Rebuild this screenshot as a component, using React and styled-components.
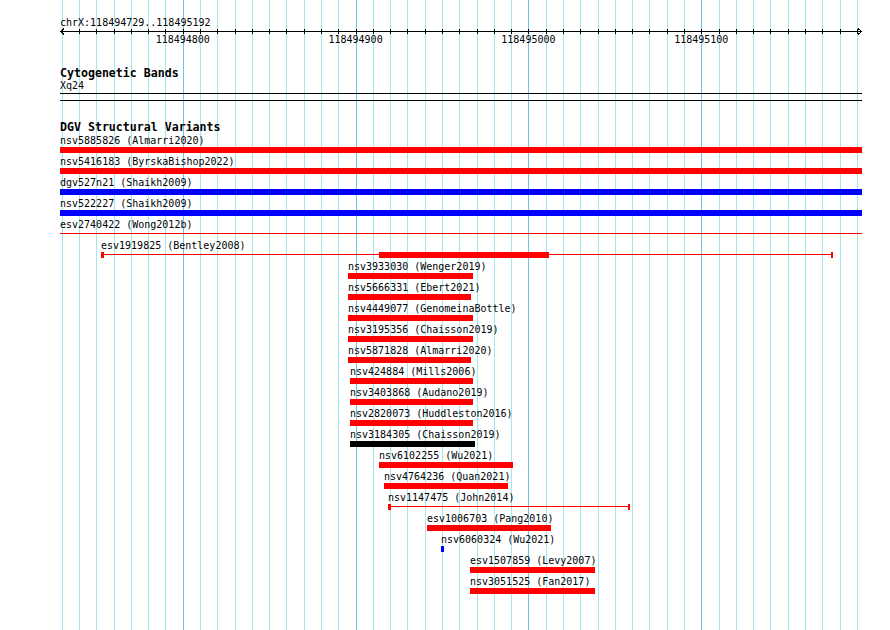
import React from "react";
import styled, { createGlobalStyle } from "styled-components";

const START = 118494729;
const END = 118495192;
const SPAN = END - START + 1;
const X0 = 60;
const WIDTH = 802;

const toX = (bp) => X0 + ((bp - START) * WIDTH) / SPAN;

const minorTicks = [];
for (let bp = START + 1; bp <= END; bp += 10) minorTicks.push(bp);
const majorTicks = minorTicks.filter((bp) => bp % 100 === 0);

const RED = "#ff0000";
const BLUE = "#0000ff";
const BLACK = "#000000";

// x values are page pixels, as read off the track
const variants = [
    { label: "nsv5885826 (Almarri2020)", start: 60, end: 862, color: RED },
    { label: "nsv5416183 (ByrskaBishop2022)", start: 60, end: 862, color: RED },
    { label: "dgv527n21 (Shaikh2009)", start: 60, end: 862, color: BLUE },
    { label: "nsv522227 (Shaikh2009)", start: 60, end: 862, color: BLUE },
    { label: "esv2740422 (Wong2012b)", start: 60, end: 862, color: RED, line: true },
    { label: "esv1919825 (Bentley2008)", start: 101, end: 833, color: RED, line: true, caps: true, core: [379, 549] },
    { label: "nsv3933030 (Wenger2019)", start: 348, end: 473, color: RED },
    { label: "nsv5666331 (Ebert2021)", start: 348, end: 471, color: RED },
    { label: "nsv4449077 (GenomeinaBottle)", start: 348, end: 473, color: RED },
    { label: "nsv3195356 (Chaisson2019)", start: 348, end: 473, color: RED },
    { label: "nsv5871828 (Almarri2020)", start: 348, end: 471, color: RED },
    { label: "nsv424884 (Mills2006)", start: 350, end: 473, color: RED },
    { label: "nsv3403868 (Audano2019)", start: 350, end: 473, color: RED },
    { label: "nsv2820073 (Huddleston2016)", start: 350, end: 473, color: RED },
    { label: "nsv3184305 (Chaisson2019)", start: 350, end: 475, color: BLACK },
    { label: "nsv6102255 (Wu2021)", start: 379, end: 513, color: RED },
    { label: "nsv4764236 (Quan2021)", start: 384, end: 508, color: RED },
    { label: "nsv1147475 (John2014)", start: 388, end: 630, color: RED, line: true, caps: true },
    { label: "esv1006703 (Pang2010)", start: 427, end: 551, color: RED },
    { label: "nsv6060324 (Wu2021)", start: 441, end: 444, color: BLUE },
    { label: "esv1507859 (Levy2007)", start: 470, end: 595, color: RED },
    { label: "nsv3051525 (Fan2017)", start: 470, end: 595, color: RED },
];

export default function App() {
    return (
        <>
            <GlobalStyle />
            <Canvas>
                <GridLines width="890" height="630">
                    {minorTicks.map((bp) => (
                        <line
                            key={bp}
                            x1={Math.round(toX(bp)) + 0.5}
                            x2={Math.round(toX(bp)) + 0.5}
                            y1="0"
                            y2="630"
                            stroke={bp % 100 === 0 ? "#6ec4e8" : "#a4e8ef"}
                            strokeWidth="1"
                        />
                    ))}
                </GridLines>
                <Track>
                    <Coords>chrX:118494729..118495192</Coords>
                    <Ruler>
                        <RulerAxis width={WIDTH} height="8">
                            <line x1="0" x2={WIDTH} y1="3.5" y2="3.5" stroke="#000" />
                            <polyline points="4,0.5 0.5,3.5 4,6.5" fill="none" stroke="#000" />
                            <polyline points={`${WIDTH - 4},0.5 ${WIDTH - 0.5},3.5 ${WIDTH - 4},6.5`} fill="none" stroke="#000" />
                            {minorTicks.map((bp) => {
                                const x = Math.round(toX(bp)) - X0 + 0.5;
                                return <line key={bp} x1={x} x2={x} y1="1" y2="6" stroke="#000" />;
                            })}
                        </RulerAxis>
                        {majorTicks.map((bp) => (
                            <RulerLabel key={bp} style={{ left: toX(bp) - X0 }}>
                                {bp}
                            </RulerLabel>
                        ))}
                    </Ruler>

                    <TrackTitle $gap={22}>Cytogenetic Bands</TrackTitle>
                    <Label>Xq24</Label>
                    <Band />

                    <TrackTitle $gap={20}>DGV Structural Variants</TrackTitle>
                    <Rows>
                        {variants.map((v) => (
                            <Row key={v.label}>
                                <Label style={{ marginLeft: v.start - X0 }}>{v.label}</Label>
                                {v.line ? (
                                    <Glyph style={{ marginLeft: v.start - X0 }} width={v.end - v.start} height="6">
                                        <rect x="0" y="2" width={v.end - v.start} height="1" fill={v.color} />
                                        {v.caps && <rect x="0" y="0" width="3" height="6" fill={v.color} />}
                                        {v.caps && <rect x={v.end - v.start - 2} y="0" width="2" height="6" fill={v.color} />}
                                        {v.core && (
                                            <rect x={v.core[0] - v.start} y="0" width={v.core[1] - v.core[0]} height="6" fill={v.color} />
                                        )}
                                    </Glyph>
                                ) : (
                                    <Bar $color={v.color} style={{ marginLeft: v.start - X0, width: v.end - v.start }} />
                                )}
                            </Row>
                        ))}
                    </Rows>
                </Track>
            </Canvas>
        </>
    );
}

const GlobalStyle = createGlobalStyle`
    body{
        margin: 0;
        background: #ffffff;
        font-family: "DejaVu Sans Mono", "Liberation Mono", monospace;
        color: #000000;
    }
`;

const Canvas = styled.div`
    position: relative;
    width: 890px;
    height: 630px;
    overflow: hidden;
    background: #ffffff;
`;

const GridLines = styled.svg`
    position: absolute;
    top: 0;
    left: 0;
    z-index: 0;
    shape-rendering: crispEdges;
`;

const Track = styled.div`
    position: relative;
    z-index: 1;
    display: flex;
    flex-direction: column;
    padding: 17px 0 0 ${X0}px;
    width: ${WIDTH}px;
`;

const Coords = styled.div`
    font-size: 10px;
    line-height: 11px;
    height: 11px;
    white-space: nowrap;
`;

const Ruler = styled.div`
    position: relative;
    height: 17px;
`;

const RulerAxis = styled.svg`
    display: block;
    overflow: visible;
    shape-rendering: crispEdges;
`;

const RulerLabel = styled.span`
    position: absolute;
    top: 6px;
    transform: translateX(-50%);
    font-size: 10px;
    line-height: 11px;
    white-space: nowrap;
`;

const TrackTitle = styled.div`
    margin-top: ${(p) => p.$gap}px;
    font-size: 11.6px;
    font-weight: bold;
    line-height: 13px;
    height: 13px;
    white-space: nowrap;
`;

const Label = styled.div`
    font-size: 10px;
    line-height: 11px;
    height: 11px;
    white-space: nowrap;
`;

const Band = styled.div`
    margin-top: 2px;
    height: 8px;
    box-sizing: border-box;
    border-top: 1px solid #000000;
    border-bottom: 1px solid #000000;
`;

const Rows = styled.div`
    margin-top: 1px;
    display: flex;
    flex-direction: column;
`;

const Row = styled.div`
    height: 21px;
    display: flex;
    flex-direction: column;
    align-items: flex-start;
`;

const Bar = styled.div`
    margin-top: 1px;
    height: 6px;
    background: ${(p) => p.$color};
`;

const Glyph = styled.svg`
    display: block;
    margin-top: 1px;
    shape-rendering: crispEdges;
`;
